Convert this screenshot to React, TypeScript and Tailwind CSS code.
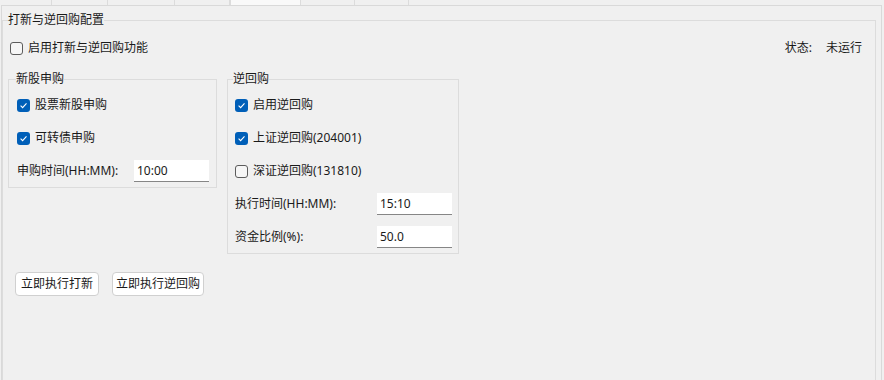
import React from 'react';

const tabs = [
  { label: '账户设置', w: 52 },
  { label: '交易配置', w: 56 },
  { label: '持仓', w: 67 },
  { label: '策略监控', w: 55 },
  { label: '打新逆回购', w: 71, active: true },
  { label: '日志记录', w: 54 },
  { label: '系统设置', w: 54 },
];

const CheckBox: React.FC<{ checked?: boolean }> = ({ checked }) =>
  checked ? (
    <span className="w-[13px] h-[13px] rounded-[3px] bg-[#005fb8] flex items-center justify-center shrink-0">
      <svg width="9" height="9" viewBox="0 0 9 9">
        <path d="M1.6 4.7 L3.6 6.6 L7.5 2.4" stroke="#ffffff" strokeWidth="1.1" fill="none" />
      </svg>
    </span>
  ) : (
    <span className="w-[13px] h-[13px] rounded-[3px] border border-[#5c5c5c] bg-[#f6f6f6] shrink-0" />
  );

const CheckRow: React.FC<{ label: string; checked?: boolean }> = ({ label, checked }) => (
  <div className="h-[22px] flex items-center gap-[5px]">
    <CheckBox checked={checked} />
    <span>{label}</span>
  </div>
);

const InputRow: React.FC<{ label: string; value: string; labelW: string }> = ({ label, value, labelW }) => (
  <div className="h-[22px] flex items-center">
    <span className={labelW}>{label}</span>
    <div className="w-[75px] h-[22px] bg-white border-b border-[#868686] flex items-center pl-[3px]">{value}</div>
  </div>
);

export default function App() {
  return (
    <div className="w-[884px] h-[380px] overflow-hidden bg-[#f0f0f0] text-[12px] text-[#1a1a1a] font-['Noto_Sans','Noto_Sans_CJK_SC',sans-serif] flex flex-col">
      {/* tab strip, only its lower edge is in view */}
      <div className="h-[5px] flex overflow-hidden">
        {tabs.map(t => (
          <div
            key={t.label}
            style={{ width: t.w }}
            className={
              t.active
                ? 'h-[5px] bg-[#f9f9f9] border-x border-[#dcdcdc] flex justify-center'
                : 'h-[5px] border-r border-[#dcdcdc] flex justify-center'
            }
          >
            {!t.active && <span className="leading-[16px] -mt-[13px] whitespace-nowrap">{t.label}</span>}
          </div>
        ))}
      </div>

      <div className="ml-px w-[881px] flex-1 border border-b-0 border-[#d9d9d9] pt-[6px] pr-[5px] overflow-hidden">
        <fieldset className="border border-[#dcdcdc] min-h-[400px] pl-[5px] pr-[13px] pt-[9px]">
          <legend className="ml-0 leading-[16px] px-0">打新与逆回购配置</legend>

          <div className="h-[22px] flex items-center pl-[2px]">
            <div className="flex items-center gap-[5px]">
              <CheckBox />
              <span>启用打新与逆回购功能</span>
            </div>
            <div className="ml-auto flex gap-[14px]">
              <span>状态:</span>
              <span>未运行</span>
            </div>
          </div>

          <div className="flex items-start gap-[10px] mt-[12px]">
            <fieldset className="w-[209px] border border-[#dcdcdc] pl-[8px] pt-[7px] pb-[5px]">
              <legend className="-ml-px leading-[16px] px-0">新股申购</legend>
              <div className="flex flex-col gap-[11px]">
                <CheckRow label="股票新股申购" checked />
                <CheckRow label="可转债申购" checked />
                <InputRow label="申购时间(HH:MM):" value="10:00" labelW="w-[117px]" />
              </div>
            </fieldset>

            <fieldset className="w-[232px] border border-[#dcdcdc] pl-[7px] pt-[7px] pb-[5px]">
              <legend className="-ml-[2px] leading-[16px] px-0">逆回购</legend>
              <div className="flex flex-col gap-[11px]">
                <CheckRow label="启用逆回购" checked />
                <CheckRow label="上证逆回购(204001)" checked />
                <CheckRow label="深证逆回购(131810)" />
                <InputRow label="执行时间(HH:MM):" value="15:10" labelW="w-[142px]" />
                <InputRow label="资金比例(%):" value="50.0" labelW="w-[142px]" />
              </div>
            </fieldset>
          </div>

          <div className="flex gap-[13px] ml-[7px] mt-[18px]">
            <button className="w-[84px] h-[24px] bg-white border border-[#d0d0d0] rounded-[4px] flex items-center justify-center">
              立即执行打新
            </button>
            <button className="w-[92px] h-[24px] bg-white border border-[#d0d0d0] rounded-[4px] flex items-center justify-center">
              立即执行逆回购
            </button>
          </div>
        </fieldset>
      </div>
    </div>
  );
}
